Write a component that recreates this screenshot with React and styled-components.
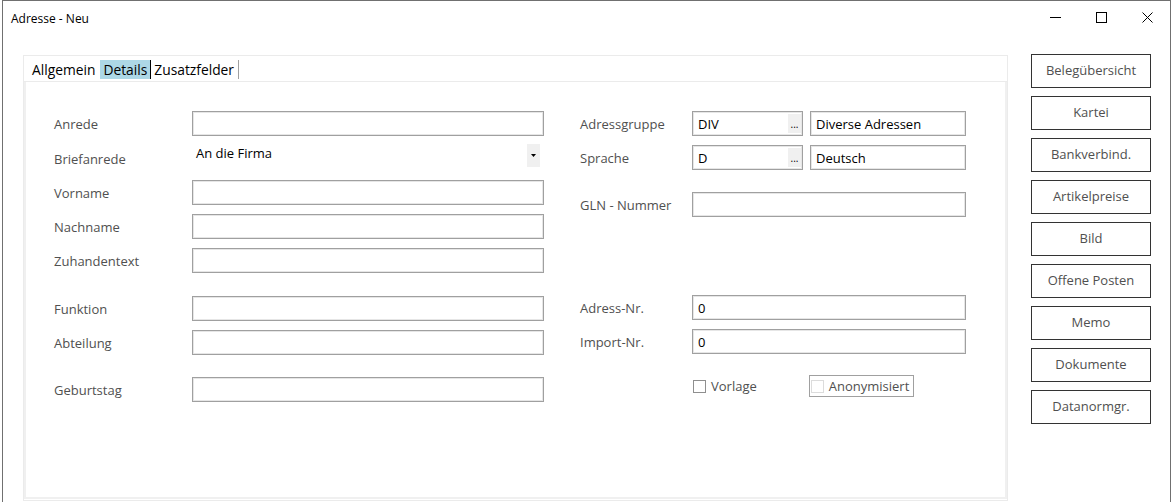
import styled, { createGlobalStyle } from "styled-components";

const GlobalStyle = createGlobalStyle`
  html, body {
    margin: 0;
    padding: 0;
    background: #ffffff;
    overflow: hidden;
  }
  body {
    font-family: "Open Sans", "Noto Sans", sans-serif;
  }
`;

const Window = styled.div`
  box-sizing: border-box;
  margin-left: 2px;
  width: 1169px;
  height: 504px;
  border: 1px solid #707070;
  display: flex;
  flex-direction: column;
  background: #fff;
`;

const TitleBar = styled.div`
  height: 34px;
  display: flex;
  align-items: center;
  justify-content: space-between;
  padding-left: 8px;
`;

const Title = styled.span`
  font-size: 12px;
  color: #000;
`;

const Controls = styled.div`
  display: flex;
  height: 100%;
`;

const CaptionButton = styled.div`
  width: 46px;
  height: 100%;
  display: flex;
  align-items: center;
  justify-content: center;
  padding-bottom: 2px;
  box-sizing: border-box;
`;

const Body = styled.div`
  flex: 1;
  display: flex;
  gap: 23px;
  padding: 20px 19px 2px 20px;
  min-height: 0;
`;

const Panel = styled.div`
  flex: 1;
  display: flex;
  flex-direction: column;
  border: 1px solid #ebebeb;
`;

const TabStrip = styled.div`
  height: 26px;
  display: flex;
  align-items: flex-start;
  padding: 4px 0 0 5px;
  box-sizing: border-box;
  border-bottom: 1px solid #ebebeb;
`;

const Tab = styled.div`
  height: 19px;
  display: flex;
  align-items: center;
  padding: 0 ${(p) => (p.$active ? "3px" : "4px")} 0 3px;
  font-size: 13.8px;
  color: #000;
  background: ${(p) => (p.$active ? "#add8e6" : "transparent")};
  border-right: 1px solid
    ${(p) =>
      p.$sep === "dark" ? "#000" : p.$sep === "light" ? "#a0a0a0" : "transparent"};
`;

const Page = styled.div`
  flex: 1;
  display: flex;
  gap: 36px;
  padding: 29px 0 0 28px;
  border: 2px solid #f0f0f0;
  border-top: none;
  margin-bottom: 1px;
`;

const Column = styled.div`
  display: flex;
  flex-direction: column;
`;

const Row = styled.div`
  display: flex;
  align-items: center;
  height: ${(p) => p.$h || 25}px;
  margin-top: ${(p) => p.$top || 0}px;
`;

const Label = styled.div`
  width: ${(p) => p.$w}px;
  flex-shrink: 0;
  font-size: 13px;
  color: #505050;
`;

const Field = styled.div`
  box-sizing: border-box;
  width: ${(p) => p.$w}px;
  height: 25px;
  border: 1px solid #a0a0a0;
  box-shadow: inset 0 0 0 1px #e6e6e6;
  display: flex;
  align-items: center;
  padding-left: 5px;
  font-size: 13px;
  color: #000;
  position: relative;
`;

const Ellipsis = styled.div`
  position: absolute;
  right: 1px;
  top: 2px;
  bottom: 2px;
  width: 13px;
  background: #f0f0f0;
  display: flex;
  align-items: center;
  justify-content: center;
  font-size: 10px;
  color: #000;
  line-height: 1;
`;

const PairGap = styled.div`
  display: flex;
  gap: 7px;
`;

const Combo = styled.div`
  width: 352px;
  height: 24px;
  align-self: flex-start;
  margin-top: -2px;
  display: flex;
  align-items: flex-start;
  justify-content: space-between;
  padding-left: 4px;
  box-sizing: border-box;
  font-size: 13px;
  color: #000;
`;

const ComboArrow = styled.div`
  width: 13px;
  height: 23px;
  margin-right: 4px;
  background: #f0f0f0;
  display: flex;
  align-items: center;
  justify-content: center;
`;

const CheckRow = styled.div`
  display: flex;
  align-items: center;
  margin-top: 21px;
  height: 22px;
`;

const CheckItem = styled.label`
  display: flex;
  align-items: center;
  gap: 5px;
  font-size: 13px;
  color: #505050;
  box-sizing: border-box;
  height: 22px;
  padding: ${(p) => (p.$boxed ? "0 4px 0 1px" : "0")};
  border: 1px solid ${(p) => (p.$boxed ? "#a0a0a0" : "transparent")};
  margin-left: ${(p) => p.$left || 0}px;
`;

const Box = styled.span`
  width: 11px;
  height: 11px;
  border: 1px solid ${(p) => (p.$disabled ? "#dcdcdc" : "#8f8f8f")};
  background: #fff;
  display: inline-block;
`;

const ButtonColumn = styled.div`
  width: 120px;
  display: flex;
  flex-direction: column;
  gap: 8px;
  margin-top: -1px;
`;

const SideButton = styled.button`
  height: 34px;
  box-sizing: border-box;
  border: 1px solid #333;
  background: #fff;
  font-family: "Open Sans", "Noto Sans", sans-serif;
  font-size: 13px;
  color: #505050;
  padding: 0 0 2px;
`;

const sideButtons = [
  "Belegübersicht",
  "Kartei",
  "Bankverbind.",
  "Artikelpreise",
  "Bild",
  "Offene Posten",
  "Memo",
  "Dokumente",
  "Datanormgr.",
];

const leftRows = [
  { label: "Anrede", top: 0 },
  { label: "Briefanrede", top: 10, combo: "An die Firma" },
  { label: "Vorname", top: 9 },
  { label: "Nachname", top: 9 },
  { label: "Zuhandentext", top: 9 },
  { label: "Funktion", top: 23 },
  { label: "Abteilung", top: 9 },
  { label: "Geburtstag", top: 22 },
];

function App() {
  return (
    <>
      <GlobalStyle />
      <Window>
        <TitleBar>
          <Title>Adresse - Neu</Title>
          <Controls>
            <CaptionButton>
              <svg width="11" height="11" viewBox="0 0 11 11">
                <path d="M0 5.5 H11" stroke="#000" strokeWidth="1" />
              </svg>
            </CaptionButton>
            <CaptionButton>
              <svg width="11" height="11" viewBox="0 0 11 11">
                <rect x="0.5" y="0.5" width="10" height="10" fill="none" stroke="#000" />
              </svg>
            </CaptionButton>
            <CaptionButton>
              <svg width="11" height="11" viewBox="0 0 11 11">
                <path d="M0.5 0.5 L10.5 10.5 M10.5 0.5 L0.5 10.5" stroke="#000" strokeWidth="1" />
              </svg>
            </CaptionButton>
          </Controls>
        </TitleBar>
        <Body>
          <Panel>
            <TabStrip>
              <Tab>Allgemein</Tab>
              <Tab $active $sep="dark">Details</Tab>
              <Tab $sep="light">Zusatzfelder</Tab>
            </TabStrip>
            <Page>
              <Column>
                {leftRows.map((r) => (
                  <Row key={r.label} $top={r.top}>
                    <Label $w={138}>{r.label}</Label>
                    {r.combo ? (
                      <Combo>
                        <span>{r.combo}</span>
                        <ComboArrow>
                          <svg width="5" height="3" viewBox="0 0 5 3">
                            <path d="M0 0 H5 L2.5 3 Z" fill="#000" />
                          </svg>
                        </ComboArrow>
                      </Combo>
                    ) : (
                      <Field $w={352} />
                    )}
                  </Row>
                ))}
              </Column>
              <Column>
                <Row>
                  <Label $w={112}>Adressgruppe</Label>
                  <PairGap>
                    <Field $w={111}>
                      DIV
                      <Ellipsis>...</Ellipsis>
                    </Field>
                    <Field $w={156}>Diverse Adressen</Field>
                  </PairGap>
                </Row>
                <Row $top={9}>
                  <Label $w={112}>Sprache</Label>
                  <PairGap>
                    <Field $w={111}>
                      D
                      <Ellipsis>...</Ellipsis>
                    </Field>
                    <Field $w={156}>Deutsch</Field>
                  </PairGap>
                </Row>
                <Row $top={22}>
                  <Label $w={112}>GLN - Nummer</Label>
                  <Field $w={274} />
                </Row>
                <Row $top={78}>
                  <Label $w={112}>Adress-Nr.</Label>
                  <Field $w={274}>0</Field>
                </Row>
                <Row $top={9}>
                  <Label $w={112}>Import-Nr.</Label>
                  <Field $w={274}>0</Field>
                </Row>
                <CheckRow>
                  <CheckItem $left={112}>
                    <Box />
                    Vorlage
                  </CheckItem>
                  <CheckItem $boxed $left={51}>
                    <Box $disabled />
                    Anonymisiert
                  </CheckItem>
                </CheckRow>
              </Column>
            </Page>
          </Panel>
          <ButtonColumn>
            {sideButtons.map((b) => (
              <SideButton key={b}>{b}</SideButton>
            ))}
          </ButtonColumn>
        </Body>
      </Window>
    </>
  );
}

export default App;
